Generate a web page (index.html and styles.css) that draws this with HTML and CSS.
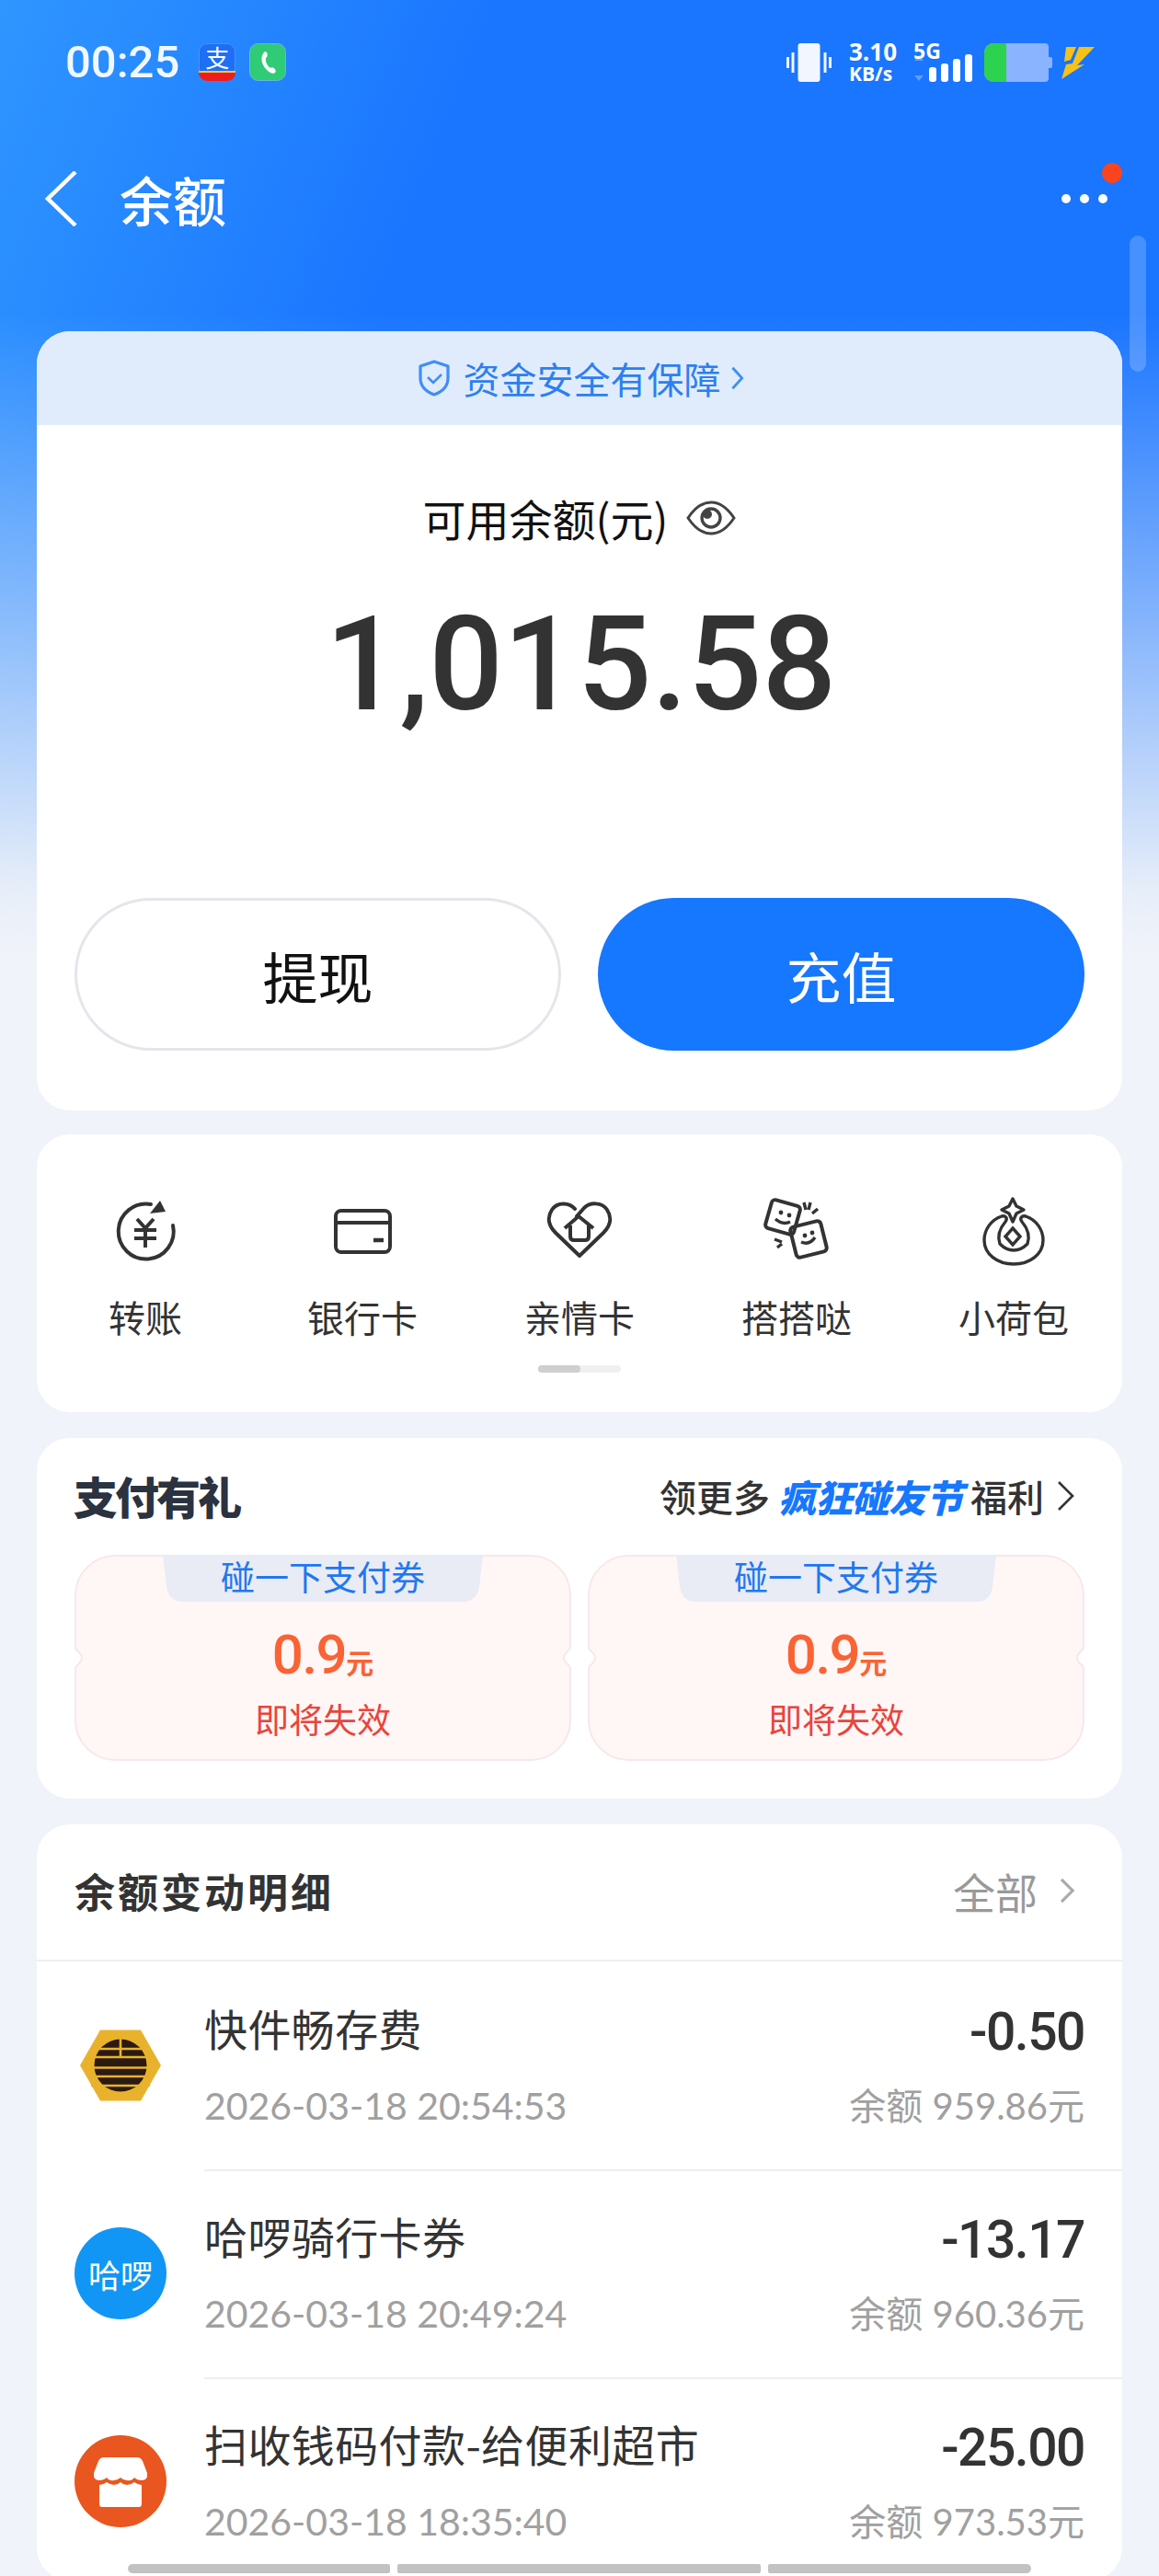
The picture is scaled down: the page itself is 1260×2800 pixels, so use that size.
FILE: index.html
```html
<!DOCTYPE html>
<html lang="zh-CN">
<head>
<meta charset="utf-8">
<title>余额</title>
<link rel="stylesheet" href="styles.css">
</head>
<body>
<div class="page">
  <header class="status">
    <div class="status-left">
      <span class="time">00:25</span>
      <span class="app-ali"><b>支</b><i></i></span>
      <svg class="app-icon" viewBox="0 0 40 41"><rect x=".5" y=".5" width="39" height="40" rx="9" fill="#2fcb76" stroke="#62b9d8"/><path d="M17 9c-5 4-5 13 2 20 3 3 7 5 9 3 1-1 1-3-1-5-2-1-3-1-4 0-3-2-6-7-5-11 2-1 2-4 1-6-1-1-1-1-2-1z" fill="#fff"/></svg>
    </div>
    <div class="status-right">
      <svg class="vib" viewBox="0 0 49 42"><rect x="12.500" width="24" height="42" rx="3" fill="#f2f6ff"/><path d="M7 10v22M1.500 15v12M42 10v22M47.500 15v12" stroke="#f2f6ff" stroke-width="3"/></svg>
      <span class="speed"><b>3.10</b><b class="unit">KB/s</b></span>
      <span class="net"><b>5G</b>
        <svg class="signal" viewBox="0 0 64 30"><path d="M6 1l5 6H1zM6 29l5-6H1z" fill="#fff" opacity=".3"/><rect x="17" y="14" width="8" height="16" rx="3" fill="#fff"/><rect x="30" y="10" width="8" height="20" rx="3" fill="#fff"/><rect x="43" y="5" width="8" height="25" rx="3" fill="#fff"/><rect x="56" y="0" width="8" height="30" rx="3" fill="#fff"/></svg>
      </span>
      <svg class="battery" viewBox="0 0 74 42"><path d="M10 0h56a4 4 0 0 1 4 4v11h2a2 2 0 0 1 2 2v8a2 2 0 0 1-2 2h-2v11a4 4 0 0 1-4 4H10A10 10 0 0 1 0 32V10A10 10 0 0 1 10 0z" fill="#8ab4ff"/><path d="M10 0h14v42H10A10 10 0 0 1 0 32V10A10 10 0 0 1 10 0z" fill="#2dd24e"/></svg>
      <svg class="bolt" viewBox="0 0 36 35"><path d="M5 0h11L10 14l-7 2zM19 0h17L17 20l8-1L0 35l5-16 7-1z" fill="#f6c218"/></svg>
    </div>
  </header>

  <nav class="nav">
    <svg class="back" viewBox="0 0 36 60"><path d="M34 1L4 30l30 29" fill="none" stroke="#fff" stroke-width="4.500"/></svg>
    <h1 class="nav-title">余额</h1>
    <div class="more"><i></i><i></i><i></i><em class="more-dot"></em></div>
  </nav>

  <section class="card balance">
    <div class="safe">
      <svg class="shield" viewBox="0 0 36 40"><path d="M18 2l15 5v13c0 9-7 15-15 18C10 35 3 29 3 20V7z" fill="none" stroke="#3f8ef5" stroke-width="3.200" stroke-linejoin="round"/><path d="M11 19l6 6 9-9" fill="none" stroke="#3f8ef5" stroke-width="2.600"/></svg>
      <span>资金安全有保障</span>
      <svg class="safe-chev" viewBox="0 0 16 30"><path d="M2 3l11 12L2 27" fill="none" stroke="#3f8ef5" stroke-width="3"/></svg>
    </div>
    <div class="avail">
      <span>可用余额(元)</span>
      <svg class="eye" viewBox="0 0 54 40"><path d="M2 20C10 8 18 3 27 3s17 5 25 17c-8 12-16 17-25 17S10 32 2 20z" fill="none" stroke="#444" stroke-width="3"/><circle cx="27" cy="20" r="10" fill="none" stroke="#444" stroke-width="3.400"/><circle cx="23" cy="16" r="5" fill="#444"/></svg>
    </div>
    <div class="amount">1,015.58</div>
    <div class="actions">
      <button class="btn btn-ghost">提现</button>
      <button class="btn btn-main">充值</button>
    </div>
  </section>

  <section class="card tools">
    <div class="tool-row">
      <div class="tool">
        <svg class="tool-icon" viewBox="0 0 72 80"><path d="M66 34A30 30 0 1 1 42 11" fill="none" stroke="#333" stroke-width="4" stroke-linecap="round"/><path d="M52 7l6 12-17 2z" fill="#333"/><path d="M27 27l9 10 9-10M24 39h24M24 48h24M36 37v21" fill="none" stroke="#333" stroke-width="4"/></svg>
        <span>转账</span>
      </div>
      <div class="tool">
        <svg class="tool-icon" viewBox="0 0 72 80"><rect x="7" y="18" width="59" height="45" rx="6" fill="none" stroke="#333" stroke-width="4"/><path d="M7 31h59" stroke="#333" stroke-width="4"/><path d="M48 50h11" stroke="#333" stroke-width="4.500"/></svg>
        <span>银行卡</span>
      </div>
      <div class="tool">
        <svg class="tool-icon" viewBox="0 0 72 80"><path d="M31 16C25 9 12 8 6 17 0 26 3 35 10 42l26 25 26-25c7-7 10-16 4-25-6-9-19-8-25-2L33 24" fill="none" stroke="#333" stroke-width="4" stroke-linejoin="round" stroke-linecap="round"/><path d="M20 37l15-13 16 13M26 34v12q0 4 4 4h12q4 0 4-4V34" fill="none" stroke="#333" stroke-width="4"/></svg>
        <span>亲情卡</span>
      </div>
      <div class="tool">
        <svg class="tool-icon" viewBox="0 0 72 80"><rect x="5" y="9" width="32" height="32" rx="4" fill="none" stroke="#333" stroke-width="4" transform="rotate(16 21 25)"/><rect x="32" y="32" width="34" height="34" rx="4" fill="none" stroke="#333" stroke-width="4" transform="rotate(-14 49 49)"/><path d="M13 27q8 7 16 3M41 52q9 4 15-5" fill="none" stroke="#333" stroke-width="3.400"/><circle cx="19" cy="20" r="2.400" fill="#333"/><circle cx="28" cy="23" r="2.400" fill="#333"/><circle cx="45" cy="45" r="2.400" fill="#333"/><circle cx="53" cy="42" r="2.400" fill="#333"/><path d="M44 9l2 8M51 9l-2 8M59 16l-6 5M12 49l8 3M15 58l5-4" stroke="#333" stroke-width="3.400"/></svg>
        <span>搭搭哒</span>
      </div>
      <div class="tool">
        <svg class="tool-icon" viewBox="0 0 72 80"><path d="M35 5l4 8 8 4-8 4-4 9-4-9-8-4 8-4z" fill="none" stroke="#333" stroke-width="3.400" stroke-linejoin="round"/><path d="M23 24C11 28 4 39 4 50c0 15 14 26 32 26s32-11 32-26c0-11-7-22-19-26-4-1-7 2-4 6 6 7 9 15 6 24-6 6-11 7-15 7s-9-1-15-7c-3-9 0-17 6-24 3-4 0-7-4-6z" fill="none" stroke="#333" stroke-width="3.400" stroke-linejoin="round"/><path d="M35 37l8 9-8 9-8-9z" fill="none" stroke="#333" stroke-width="3.400"/></svg>
        <span>小荷包</span>
      </div>
    </div>
    <div class="pager"><i></i></div>
  </section>

  <section class="card promo">
    <div class="promo-head">
      <h2 class="promo-title">支付有礼</h2>
      <div class="promo-link"><span>领更多</span><em>疯狂碰友节</em><span>福利</span>
        <svg class="promo-chev" viewBox="0 0 20 34"><path d="M2 2l15 15L2 32" fill="none" stroke="#333" stroke-width="2.600"/></svg>
      </div>
    </div>
    <div class="coupons">
      <div class="coupon">
        <svg class="coupon-bg" viewBox="0 0 540 224"><path d="M44 1H496a43 43 0 0 1 43 43V100q0 3-3 5-8 7 0 14 3 2 3 5v56a43 43 0 0 1-43 43H44a43 43 0 0 1-43-43V124q0-3 3-5 8-7 0-14-3-2-3-5V44A43 43 0 0 1 44 1z" fill="#fff6f6" stroke="#f6e8ec" stroke-width="2"/></svg>
        <div class="coupon-tab">碰一下支付券</div>
        <div class="coupon-val">0.9<small>元</small></div>
        <div class="coupon-note">即将失效</div>
      </div>
      <div class="coupon">
        <svg class="coupon-bg" viewBox="0 0 540 224"><path d="M44 1H496a43 43 0 0 1 43 43V100q0 3-3 5-8 7 0 14 3 2 3 5v56a43 43 0 0 1-43 43H44a43 43 0 0 1-43-43V124q0-3 3-5 8-7 0-14-3-2-3-5V44A43 43 0 0 1 44 1z" fill="#fff6f6" stroke="#f6e8ec" stroke-width="2"/></svg>
        <div class="coupon-tab">碰一下支付券</div>
        <div class="coupon-val">0.9<small>元</small></div>
        <div class="coupon-note">即将失效</div>
      </div>
    </div>
  </section>

  <section class="card detail">
    <div class="detail-head">
      <h2 class="detail-title">余额变动明细</h2>
      <div class="detail-all">全部
        <svg class="detail-chev" viewBox="0 0 20 30"><path d="M3 2l13 13L3 28" fill="none" stroke="#aaa" stroke-width="3.400"/></svg>
      </div>
    </div>
    <div class="tx">
      <svg class="tx-icon" viewBox="0 0 100 100"><path d="M28 11.500H72L94 50 72 88.500H28L6 50z" fill="#e9b22c"/><circle cx="50" cy="50" r="28.500" fill="#2a1a12"/><path d="M18 32h64M18 41h64M18 52.500h64M18 62h64M18 72h64M50 20v21" stroke="#e9b22c" stroke-width="2.600"/></svg>
      <div class="tx-main"><div class="tx-name">快件畅存费</div><div class="tx-date">2026-03-18 20:54:53</div></div>
      <div class="tx-side"><div class="tx-amt">-0.50</div><div class="tx-bal">余额 959.86元</div></div>
    </div>
    <div class="tx">
      <div class="tx-logo logo-blue">哈啰</div>
      <div class="tx-main"><div class="tx-name">哈啰骑行卡券</div><div class="tx-date">2026-03-18 20:49:24</div></div>
      <div class="tx-side"><div class="tx-amt">-13.17</div><div class="tx-bal">余额 960.36元</div></div>
    </div>
    <div class="tx">
      <svg class="tx-icon" viewBox="0 0 100 100"><circle cx="50" cy="50" r="50" fill="#e9561f"/><path d="M32 24H68q4 0 6 4l5 13q1 8-6 8-5 0-8-3-3 4-8 3-4 0-7-3-3 3-7 3-5 1-8-3-3 3-8 3-7 0-6-8l5-13q2-4 6-4z" fill="#fff"/><path d="M27 54q4 0 8-3 4 3 8 3 4 0 7-3 3 3 7 3 4 0 8-3 4 3 8 3V75q0 3-3 3H30q-3 0-3-3z" fill="#fff"/></svg>
      <div class="tx-main"><div class="tx-name">扫收钱码付款-给便利超市</div><div class="tx-date">2026-03-18 18:35:40</div></div>
      <div class="tx-side"><div class="tx-amt">-25.00</div><div class="tx-bal">余额 973.53元</div></div>
    </div>
  </section>

  <div class="scroll-v"></div>
  <div class="scroll-h"><i></i><i></i><i></i></div>
</div>
</body>
</html>
```
FILE: styles.css
```css
* { box-sizing: border-box; }
html, body { margin: 0; padding: 0; }
body { font-family: "Noto Sans CJK SC", "Noto Sans", sans-serif; color: #333; }
h1, h2 { margin: 0; font: inherit; }
.page {
  position: relative;
  width: 1260px;
  height: 2800px;
  overflow: hidden;
  background:
    linear-gradient(180deg, rgba(240,243,249,0) 340px, rgba(240,243,249,.48) 660px, rgba(240,243,249,.96) 970px, #f0f3f9 1040px),
    linear-gradient(112deg, #2f96ff 0, #1a75ff 520px);
  display: flex;
  flex-direction: column;
  padding: 0 40px;
}
.status { flex: none; height: 137px; display: flex; justify-content: space-between; margin: 0 -40px; padding: 47px 70px 0 71px; color: #fff; }
.status-left { display: flex; align-items: flex-start; gap: 15px; }
.time { font-family: Roboto, sans-serif; font-weight: 500; font-size: 49px; line-height: 42px; color: #f0f8ff; margin-right: 6px; }
.app-icon { width: 40px; height: 41px; display: block; }
.app-ali { display: flex; flex-direction: column; align-items: center; width: 40px; height: 41px; border-radius: 9px; background: #1e6ff5; box-shadow: inset 0 0 0 1px #4d94f8; }
.app-ali b { font-size: 26px; line-height: 30px; height: 30px; font-weight: 400; color: #fff; }
.app-ali i { display: block; width: 100%; height: 11px; background: #ee1c1c; border-top: 2px solid #ffc23a; border-radius: 0 0 9px 9px; }
.status-right { display: flex; align-items: flex-start; }
.vib { width: 49px; height: 42px; margin-right: 19px; }
.speed { display: flex; flex-direction: column; font-family: "Open Sans", sans-serif; width: 51px; margin-right: 19px; margin-top: -3px; }
.speed b { font-size: 26px; line-height: 24px; font-weight: 700; }
.speed .unit { font-size: 21px; line-height: 24px; }
.net { position: relative; width: 64px; height: 42px; margin-right: 13px; }
.net b { font-family: "Open Sans", sans-serif; font-size: 23px; line-height: 20px; position: absolute; top: -2px; left: 0; font-weight: 700; }
.signal { position: absolute; left: 0; bottom: 0; width: 64px; height: 30px; display: block; }
.battery { width: 74px; height: 42px; margin-right: 10px; }
.bolt { width: 36px; height: 35px; margin-top: 4px; }
.nav { flex: none; height: 158px; display: flex; align-items: center; margin: 0 -40px; padding: 0 56px 0 48px; }
.back { width: 36px; height: 60px; }
.nav-title { font-size: 58px; font-weight: 500; color: #fff; margin-left: 46px; line-height: 80px; }
.more { margin-left: auto; display: flex; gap: 10px; position: relative; }
.more i { width: 10px; height: 10px; border-radius: 50%; background: #fff; }
.more-dot { position: absolute; width: 22px; height: 22px; border-radius: 50%; background: #fa4420; right: -16px; top: -34px; }
.card { background: #fff; border-radius: 36px; width: 1180px; flex: none; }
.balance { height: 847px; overflow: hidden; margin-top: 65px; display: flex; flex-direction: column; }
.safe { height: 102px; background: #e0ecfc; color: #2d7ff0; display: flex; align-items: center; justify-content: center; font-size: 40px; gap: 14px; padding-left: 3px; }
.shield { width: 36px; height: 40px; }
.safe-chev { width: 16px; height: 28px; margin-left: -4px; }
.avail { display: flex; justify-content: center; align-items: center; margin-top: 69px; font-size: 47px; line-height: 64px; color: #111; gap: 20px; }
.eye { width: 54px; height: 40px; }
.amount { text-align: center; font-family: Roboto, sans-serif; font-weight: 500; font-size: 142px; line-height: 170px; color: #333; margin-top: 43px; padding-left: 3px; }
.actions { display: flex; justify-content: space-between; padding: 0 41px; margin-top: auto; margin-bottom: 65px; }
.btn { width: 529px; height: 166px; border-radius: 83px; font: inherit; font-size: 60px; }
.btn-ghost { background: #fff; border: 3px solid #e4e6ea; color: #111; }
.btn-main { background: #1677ff; border: 0; color: #fff; }
.tools { height: 302px; margin-top: 26px; display: flex; flex-direction: column; }
.tool-row { display: grid; grid-template-columns: repeat(5, 1fr); padding-top: 65px; }
.tool { display: flex; flex-direction: column; align-items: center; font-size: 40px; line-height: 56px; color: #333; gap: 25px; }
.tool-icon { width: 72px; height: 80px; display: block; }
.pager { width: 90px; height: 8px; background: #f0f0f0; border-radius: 4px; margin: 25px auto 0; }
.pager i { display: block; width: 46px; height: 8px; background: #cfcfcf; border-radius: 4px; }
.promo { height: 392px; margin-top: 28px; padding: 0 41px; }
.promo-head { display: flex; justify-content: space-between; align-items: center; height: 127px; }
.promo-title { font-size: 48px; font-weight: 900; color: #2b3240; line-height: 64px; letter-spacing: -3px; margin-left: -1px; margin-top: -3px; }
.promo-link { font-size: 40px; font-weight: 500; display: flex; align-items: center; gap: 9px; white-space: nowrap; color: #333; margin-right: 10px; margin-top: -2px; }
.promo-link em { font-style: italic; font-weight: 900; color: #1677ff; font-size: 41px; letter-spacing: -1px; }
.promo-chev { width: 20px; height: 34px; margin-left: 5px; }
.coupons { display: flex; justify-content: space-between; }
.coupon { position: relative; width: 540px; height: 224px; display: flex; flex-direction: column; align-items: center; text-align: center; }
.coupon-bg { position: absolute; inset: 0; width: 100%; height: 100%; }
.coupon-tab { position: relative; width: 348px; height: 51px; background: #e9ebf5; clip-path: path("M0 0H348L344 34Q342 51 326 51H22Q6 51 4 34Z"); color: #1f78f0; font-size: 37px; line-height: 46px; }
.coupon-val { position: relative; font-family: Roboto, sans-serif; font-weight: 500; font-size: 60px; line-height: 70px; letter-spacing: -1.500px; color: #fa6334; margin-top: 23px; }
.coupon-val small { font-family: "Noto Sans CJK SC", sans-serif; font-size: 30px; font-weight: 700; letter-spacing: 0; }
.coupon-note { position: relative; font-size: 37px; line-height: 50px; color: #e8453c; margin-top: 2px; }
.detail { margin-top: 28px; height: 822px; }
.detail-head { height: 149px; display: flex; justify-content: space-between; align-items: center; padding: 0 41px; border-bottom: 2px solid #eeeeee; }
.detail-title { font-size: 44px; font-weight: 700; line-height: 62px; letter-spacing: 3px; color: #333; margin-top: -3px; }
.detail-all { font-size: 46px; color: #999; display: flex; align-items: center; gap: 23px; margin-right: 9px; margin-top: -3px; }
.detail-chev { width: 19px; height: 28px; }
.tx { position: relative; height: 226px; display: flex; align-items: center; padding: 0 41px; }
.tx + .tx::before { content: ""; position: absolute; left: 182px; right: 0; top: 0; height: 2px; background: #eeeeee; }
.tx-icon, .tx-logo { width: 100px; height: 100px; flex: none; }
.tx-logo { border-radius: 50%; display: flex; align-items: center; justify-content: center; color: #fff; font-size: 35px; font-weight: 400; }
.logo-blue { background: #1296f5; }
.tx-main { margin-left: 41px; flex: 1; }
.tx-name { font-size: 47px; line-height: 64px; color: #333; margin-top: -2px; letter-spacing: .4px; }
.tx-date { font-family: Lato, sans-serif; font-size: 41px; line-height: 56px; color: #a0a0a0; margin-top: 25px; }
.tx-side { text-align: right; }
.tx-amt { font-family: Roboto, sans-serif; font-weight: 500; font-size: 57px; line-height: 64px; letter-spacing: -1.500px; color: #333; margin-top: 3px; }
.tx-bal { font-family: Lato, "Noto Sans CJK SC", sans-serif; font-size: 40px; line-height: 56px; color: #a0a0a0; margin-top: 20px; }
.scroll-v { position: absolute; left: 1228px; top: 256px; width: 18px; height: 148px; border-radius: 9px; background: rgba(255,255,255,.2); }
.scroll-h { position: absolute; left: 139px; top: 2787px; width: 990px; height: 10px; display: flex; gap: 8px; }
.scroll-h i { display: block; height: 10px; background: #c2c2c2; border-radius: 2px; }
.scroll-h i:nth-child(1) { width: 285px; border-radius: 5px 2px 2px 5px; }
.scroll-h i:nth-child(2) { width: 395px; }
.scroll-h i:nth-child(3) { width: 286px; border-radius: 2px 5px 5px 2px; }
```
